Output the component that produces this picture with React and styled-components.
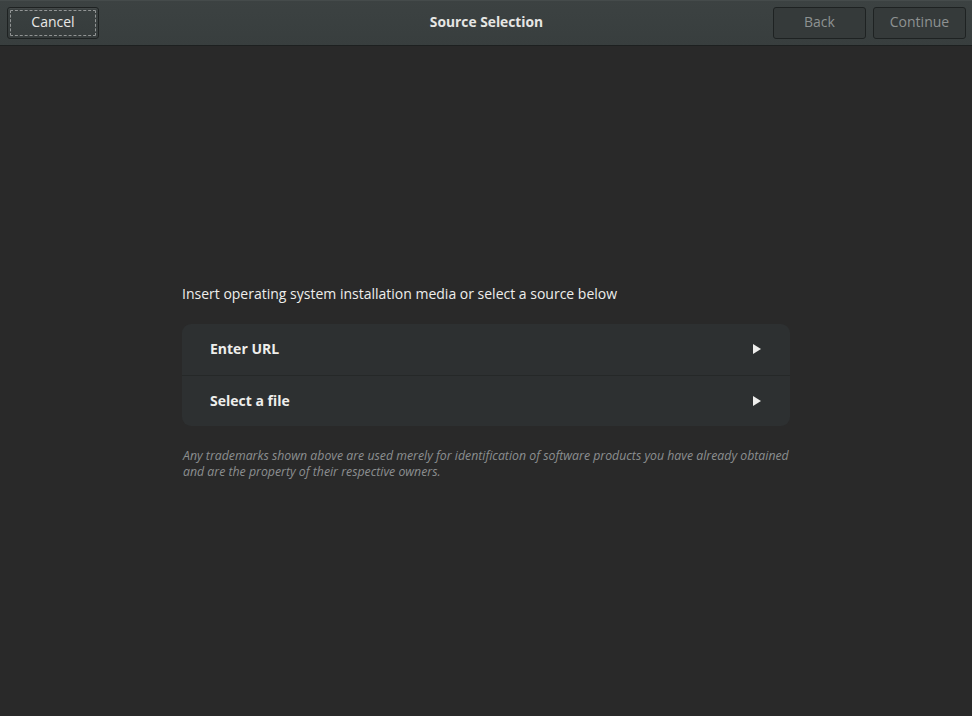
import React from "react";
import styled, { createGlobalStyle } from "styled-components";

const Global = createGlobalStyle`
  html, body { margin: 0; padding: 0; background: #292929; }
  body { font-family: "Open Sans", "Noto Sans", sans-serif; }
  #root { height: 716px; }
`;

const Window = styled.div`
  width: 972px;
  height: 716px;
  display: flex;
  flex-direction: column;
  background: #292929;
  overflow: hidden;
`;

const HeaderBar = styled.header`
  height: 46px;
  box-sizing: border-box;
  display: grid;
  grid-template-columns: 1fr auto 1fr;
  align-items: start;
  padding: 7px 6px 0 7px;
  background: linear-gradient(#3c4242, #383e3e);
  border-bottom: 1px solid #1d2020;
  box-shadow: inset 0 1px 0 #454b4b;
`;

const Title = styled.div`
  font-weight: 700;
  font-size: 13.8px;
  color: #e6e6e4;
  line-height: 29px;
  text-align: center;
`;

const Side = styled.div`
  display: flex;
  gap: 7px;
  justify-content: ${(p) => (p.$end ? "flex-end" : "flex-start")};
`;

const Button = styled.button`
  position: relative;
  width: ${(p) => p.$w}px;
  height: 32px;
  box-sizing: border-box;
  border: 1px solid #1e2222;
  border-radius: 3px;
  background: ${(p) => (p.$disabled ? "#353a3a" : "linear-gradient(#3a4040, #363c3c)")};
  color: ${(p) => (p.$disabled ? "#8e9292" : "#e8e8e6")};
  font-family: "Open Sans", "Noto Sans", sans-serif;
  font-size: 14px;
  line-height: 28px;
  padding: 0 0 3px 0;
  box-shadow: ${(p) => (p.$disabled ? "none" : "inset 0 1px 0 rgba(255,255,255,0.05)")};
  &::after {
    content: "";
    display: ${(p) => (p.$focus ? "block" : "none")};
    position: absolute;
    inset: 2px;
    border: 1px dashed rgba(220, 220, 220, 0.55);
    border-radius: 1px;
  }
`;

const Content = styled.main`
  flex: 1;
  display: flex;
  flex-direction: column;
  padding: 239px 182px 0 182px;
`;

const Intro = styled.p`
  margin: 0 0 21px 0;
  font-size: 14px;
  color: #eeeeec;
  line-height: 18px;
`;

const List = styled.div`
  background: #2d3031;
  border-radius: 9px;
  overflow: hidden;
  display: flex;
  flex-direction: column;
`;

const Row = styled.div`
  height: 51px;
  display: flex;
  align-items: center;
  justify-content: space-between;
  padding: 0 28px 2px 28px;
  box-sizing: border-box;
  border-top: ${(p) => (p.$first ? "none" : "1px solid #252828")};
  font-weight: 700;
  font-size: 14px;
  color: #eeeeec;
  svg { margin-top: 1px; }
`;

const Note = styled.p`
  margin: 22px 0 0 1px;
  font-style: italic;
  font-size: 12.3px;
  line-height: 16px;
  color: #8c8f90;
`;

const Arrow = () => (
  <svg width="10" height="12" viewBox="0 0 10 12">
    <path d="M1 1 L9 6 L1 11 Z" fill="#eeeeec" />
  </svg>
);

export default function App() {
  return (
    <>
      <Global />
      <Window>
        <HeaderBar>
          <Side>
            <Button $w={92} $focus>Cancel</Button>
          </Side>
          <Title>Source Selection</Title>
          <Side $end>
            <Button $w={93} $disabled>Back</Button>
            <Button $w={93} $disabled>Continue</Button>
          </Side>
        </HeaderBar>
        <Content>
          <Intro>Insert operating system installation media or select a source below</Intro>
          <List>
            <Row $first>
              <span>Enter URL</span>
              <Arrow />
            </Row>
            <Row>
              <span>Select a file</span>
              <Arrow />
            </Row>
          </List>
          <Note>
            Any trademarks shown above are used merely for identification of software products you have already obtained
            <br />
            and are the property of their respective owners.
          </Note>
        </Content>
      </Window>
    </>
  );
}
